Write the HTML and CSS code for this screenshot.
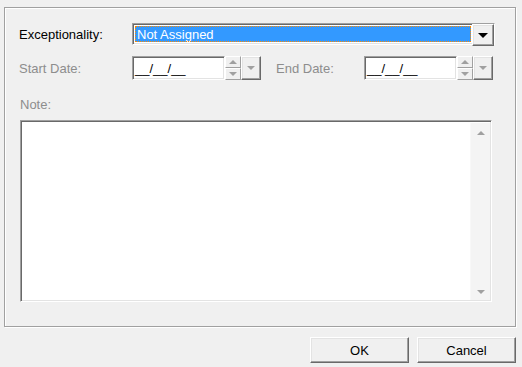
FILE: index.html
```html
<!DOCTYPE html>
<html lang="en">
<head>
    <meta charset="UTF-8">
    <title>Exceptionality</title>
    <link rel="stylesheet" href="styles.css">
</head>
<body>
    <div class="panel">
        <!-- Exceptionality combo -->
        <div class="row">
            <label class="label">Exceptionality:</label>
            <div class="combo sunken">
                <div class="combo-value">Not Assigned</div>
                <div class="btn3d combo-btn"><span class="tri-down black"></span></div>
            </div>
        </div>

        <!-- Dates -->
        <div class="row dates">
            <label class="label disabled">Start Date:</label>
            <div class="date">
                <div class="date-box sunken">__/__/__</div>
                <div class="spin">
                    <div class="spin-btn"><span class="tri-up"></span></div>
                    <div class="spin-btn"><span class="tri-down"></span></div>
                </div>
                <div class="btn3d date-drop"><span class="tri-down"></span></div>
            </div>
            <label class="label end-label disabled">End Date:</label>
            <div class="date">
                <div class="date-box sunken">__/__/__</div>
                <div class="spin">
                    <div class="spin-btn"><span class="tri-up"></span></div>
                    <div class="spin-btn"><span class="tri-down"></span></div>
                </div>
                <div class="btn3d date-drop"><span class="tri-down"></span></div>
            </div>
        </div>

        <div class="note-label disabled">Note:</div>
        <div class="note sunken">
            <div class="note-text"></div>
            <div class="scrollbar">
                <span class="tri-up"></span>
                <span class="tri-down"></span>
            </div>
        </div>
    </div>

    <div class="buttons">
        <button class="btn3d dlg-btn">OK</button>
        <button class="btn3d dlg-btn">Cancel</button>
    </div>
</body>
</html>
```

FILE: styles.css
```css
body {
    margin: 0;
    background-color: #f0f0f0;
    font-family: "Liberation Sans", Arial, sans-serif;
    font-size: 13px;
    color: #000;
}
.panel {
    margin: 7px 0 0 4px;
    width: 512px;
    height: 320px;
    box-sizing: border-box;
    border: 1px solid #a0a0a0;
    box-shadow: inset 1px 1px #fff, 1px 1px #fff;
    padding: 15px 0 0 14px;
}
.row {
    display: flex;
    align-items: center;
    height: 22px;
}
.label {
    width: 113px;
}
.disabled {
    color: #8d8d8d;
}
.sunken {
    box-sizing: border-box;
    border: 1px solid;
    border-color: #a0a0a0 #fff #fff #a0a0a0;
    box-shadow: inset 1px 1px #696969, inset -1px -1px #e3e3e3;
    background: #fff;
}
.btn3d {
    box-sizing: border-box;
    background: #f0f0f0;
    border: 1px solid;
    border-color: #fff #696969 #696969 #fff;
    box-shadow: inset -1px -1px #a0a0a0, inset 1px 1px #e3e3e3;
}
.combo {
    width: 363px;
    height: 22px;
    display: flex;
    padding: 2px;
}
.combo-value {
    flex: 1;
    background: #3399ff;
    color: #fff;
    outline: 1px dotted #ff8a00;
    outline-offset: -1px;
    padding-left: 2px;
    line-height: 17px;
    margin-right: 1px;
}
.combo-btn {
    width: 22px;
    margin: -2px -2px -2px 0;
    height: 22px;
    display: flex;
    align-items: center;
    justify-content: center;
}
.tri-down, .tri-up {
    width: 0;
    height: 0;
    border-left: 4px solid transparent;
    border-right: 4px solid transparent;
}
.tri-down {
    border-top: 4px solid #a0a0a0;
}
.tri-up {
    border-bottom: 4px solid #a0a0a0;
}
.tri-down.black {
    border-left-width: 5px;
    border-right-width: 5px;
    border-top: 5px solid #000;
}
.dates {
    margin-top: 11px;
    height: 24px;
}
.date {
    display: flex;
    height: 24px;
    width: 129px;
}
.date-box {
    width: 93px;
    padding: 3px 0 0 2px;
    line-height: 17px;
    color: #000;
}
.spin {
    width: 16px;
    display: flex;
    flex-direction: column;
}
.spin-btn {
    flex: 1;
    display: flex;
    align-items: center;
    justify-content: center;
    background: #f0f0f0;
    border: 1px solid;
    border-color: #fff #a0a0a0 #a0a0a0 #fff;
}
.date-drop {
    width: 20px;
    display: flex;
    align-items: center;
    justify-content: center;
}
.end-label {
    margin-left: 15px;
    width: 88px;
}
.note-label {
    margin-top: 17px;
    height: 15px;
    margin-left: 1px;
}
.note {
    margin: 8px 0 0 1px;
    width: 472px;
    height: 182px;
    display: flex;
    padding: 2px 1px 1px 2px;
}
.note-text {
    flex: 1;
}
.scrollbar {
    width: 19px;
    background: #f4f4f4;
    border-left: 1px solid #f8f8f8;
    display: flex;
    flex-direction: column;
    justify-content: space-between;
    align-items: center;
    padding: 8px 0 6px;
}
.buttons {
    width: 512px;
    margin: 10px 0 0 4px;
    display: flex;
    justify-content: flex-end;
    gap: 8px;
}
.dlg-btn {
    width: 99px;
    height: 26px;
    font-family: "Liberation Sans", Arial, sans-serif;
    font-size: 13px;
    color: #000;
    padding: 0;
}
```
